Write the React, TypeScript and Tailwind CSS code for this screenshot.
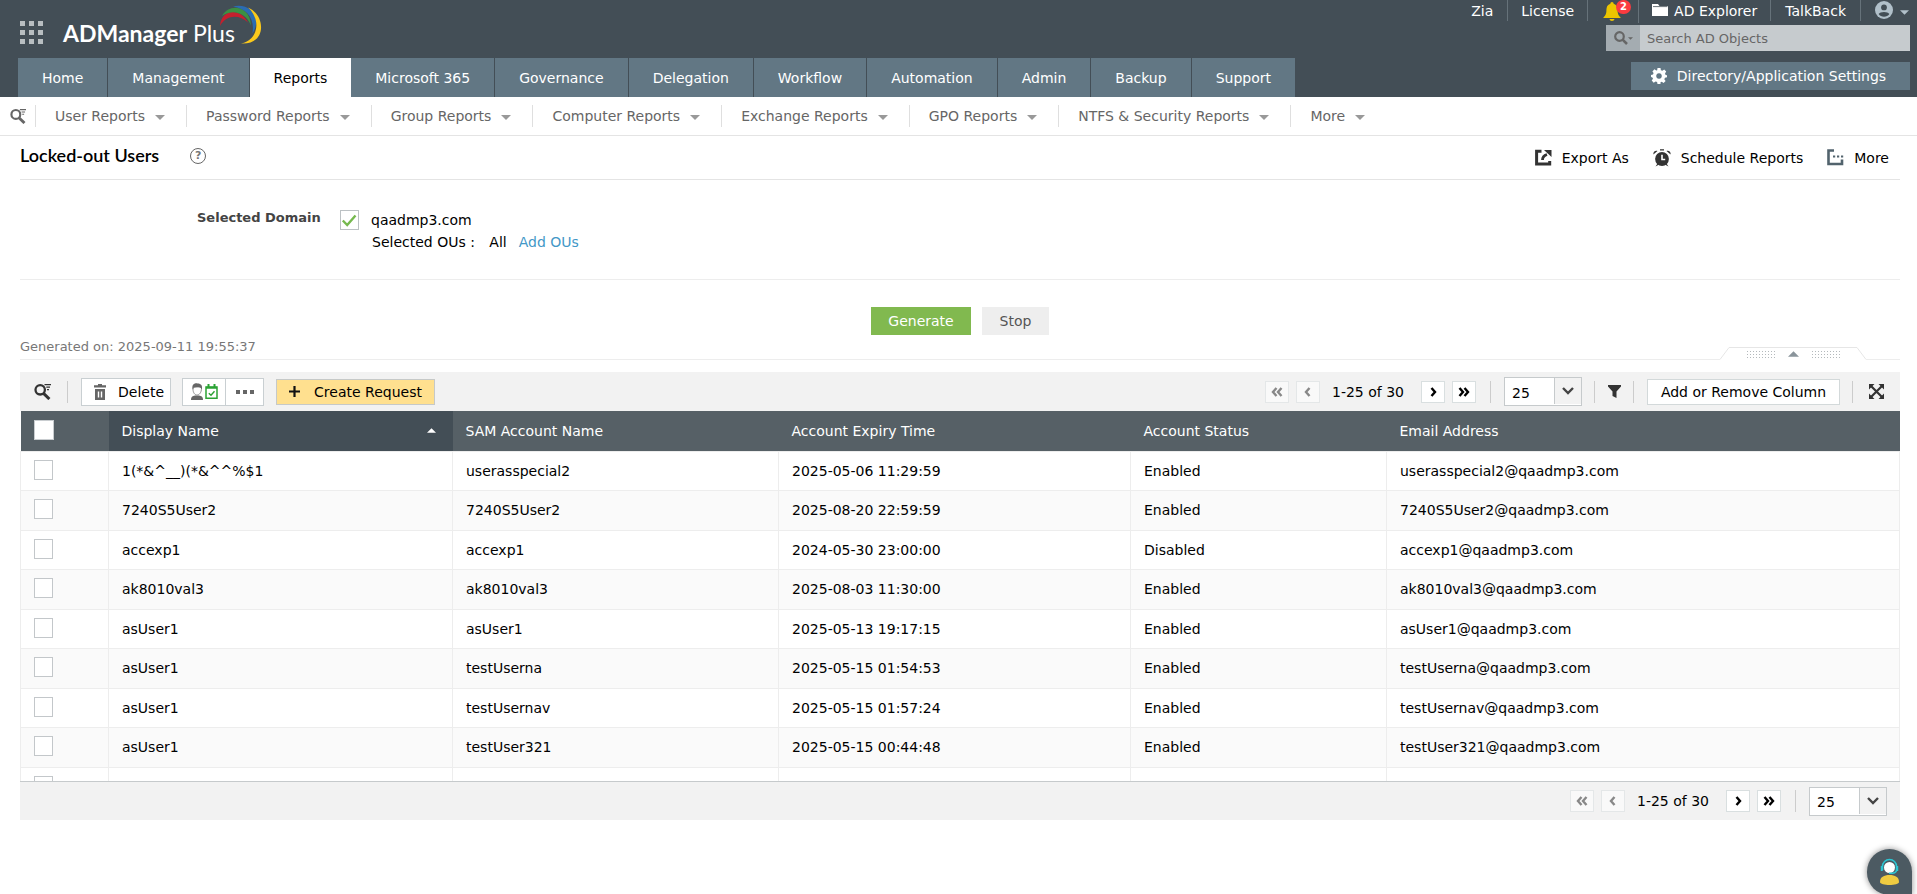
import React from "react";

const tabs = ["Home", "Management", "Reports", "Microsoft 365", "Governance", "Delegation", "Workflow", "Automation", "Admin", "Backup", "Support"];

const reportMenus = ["User Reports", "Password Reports", "Group Reports", "Computer Reports", "Exchange Reports", "GPO Reports", "NTFS & Security Reports", "More"];

const columns = ["SAM Account Name", "Account Expiry Time", "Account Status", "Email Address"];

const rows: string[][] = [
  ["1(*&^__)(*&^^%$1", "userasspecial2", "2025-05-06 11:29:59", "Enabled", "userasspecial2@qaadmp3.com"],
  ["7240S5User2", "7240S5User2", "2025-08-20 22:59:59", "Enabled", "7240S5User2@qaadmp3.com"],
  ["accexp1", "accexp1", "2024-05-30 23:00:00", "Disabled", "accexp1@qaadmp3.com"],
  ["ak8010val3", "ak8010val3", "2025-08-03 11:30:00", "Enabled", "ak8010val3@qaadmp3.com"],
  ["asUser1", "asUser1", "2025-05-13 19:17:15", "Enabled", "asUser1@qaadmp3.com"],
  ["asUser1", "testUserna", "2025-05-15 01:54:53", "Enabled", "testUserna@qaadmp3.com"],
  ["asUser1", "testUsernav", "2025-05-15 01:57:24", "Enabled", "testUsernav@qaadmp3.com"],
  ["asUser1", "testUser321", "2025-05-15 00:44:48", "Enabled", "testUser321@qaadmp3.com"],
  ["", "", "", "", ""],
];

function Caret({ className, up }: { className: string; up?: boolean }) {
  return (
    <svg viewBox="0 0 10 5" className={className} fill="currentColor" aria-hidden="true">
      <path d={up ? "M0 5h10L5 0z" : "M0 0h10L5 5z"} />
    </svg>
  );
}

function FilterSearchIcon({ className }: { className: string }) {
  return (
    <svg viewBox="0 0 17 17" className={className} fill="none" stroke="currentColor" aria-hidden="true">
      <circle cx="6.200" cy="6.800" r="4.700" strokeWidth="2.300" />
      <path d="M9.500 10.300L15.400 16" strokeWidth="3" />
      <path d="M10.500 1.700H17M12.300 4.200H16M13 6.700H15" strokeWidth="1.200" />
    </svg>
  );
}

function Logo() {
  return (
    <div className="flex items-start">
      <span className="mt-[17px] font-[Lato,sans-serif] text-[23px] leading-8 text-white">
        <b className="font-bold">ADManager</b> Plus
      </span>
      <svg viewBox="0 0 44 42" className="-ml-4 mt-1 h-[42px] w-11" aria-hidden="true">
        <path d="M1 22C2 5 21 3 29 18.500C20 10 7 11 1 22Z" fill="#c4202e" />
        <path d="M3 12C10-1 31 1 32 21.500C27 9 14 4.500 3 12Z" fill="#3c9043" />
        <path d="M14 2.500C30-2 44 13 33.500 29.500C36 14 28 5 14 2.500Z" fill="#2b6cb3" />
        <path d="M29 3.500C47 11 48 41 22 39.500C40 36 42 15 29 3.500Z" fill="#fbc91b" />
      </svg>
    </div>
  );
}

function Divider({ className }: { className: string }) {
  return <span className={`w-px ${className}`} />;
}

function Header() {
  return (
    <header className="flex justify-between bg-[#434e56] text-sm text-white">
      <div className="flex flex-col">
        <div className="flex h-[58px]">
          <button aria-label="Apps" className="ml-5 mr-[19px] mt-[21px] h-6 w-6">
            <svg viewBox="0 0 24 24" className="h-6 w-6" fill="#b8bec1">
              <path d="M0 0h5v5H0zM9 0h5v5H9zM18 0h5v5h-5zM0 9h5v5H0zM9 9h5v5H9zM18 9h5v5h-5zM0 18h5v5H0zM9 18h5v5H9zM18 18h5v5h-5z" />
            </svg>
          </button>
          <Logo />
        </div>
        <nav className="ml-[18px] flex h-[39px]">
          {tabs.map((tab) => (
            <a
              key={tab}
              href="#"
              className={
                tab === "Reports"
                  ? "flex items-center bg-white px-6 text-black"
                  : "flex items-center border-r border-[#434e56] bg-[#627784] px-6"
              }
            >
              {tab}
            </a>
          ))}
        </nav>
      </div>

      <div className="flex flex-col items-end pr-[7px]">
        <div className="flex h-[25px] items-start leading-[22px]">
          <a href="#" className="px-[14px]">Zia</a>
          <Divider className="h-[21px] bg-[#66727a]" />
          <a href="#" className="px-[13px]">License</a>
          <Divider className="h-[21px] bg-[#66727a]" />
          <button aria-label="Notifications" className="relative h-[21px] w-[50px]">
            <svg viewBox="0 0 18 19" className="ml-[15px] mt-px h-[19px] w-[18px]" fill="#ecc500">
              <path d="M9 0C10 0 10.600.8 10.600 1.700C13.600 2.500 14.600 5 14.600 8C14.600 12 15.500 13.400 17.600 15.400V16H.4V15.400C2.500 13.400 3.400 12 3.400 8C3.400 5 4.400 2.500 7.400 1.700C7.400.8 8 0 9 0ZM6.500 17H11.500C11.300 18.300 10.300 19 9 19S6.700 18.300 6.500 17Z" />
            </svg>
            <span className="absolute left-7 top-0 h-[14px] w-[15px] rounded-full bg-[#fb3b40] text-center text-[10px] font-bold leading-[14px]">2</span>
          </button>
          <Divider className="h-[23px] bg-[#66727a]" />
          <a href="#" className="flex px-[13px]">
            <svg viewBox="0 0 16 12" className="mr-[6px] mt-1 h-3 w-4" fill="#fff">
              <path d="M0 0h6l1.500 2H16v10H0z" />
              <path d="M1 2.600H15.500" stroke="#434e56" strokeWidth=".8" />
            </svg>
            AD Explorer
          </a>
          <Divider className="h-[21px] bg-[#66727a]" />
          <a href="#" className="px-[14px]">TalkBack</a>
          <Divider className="h-[21px] bg-[#66727a]" />
          <button aria-label="Account" className="ml-[14px] flex">
            <svg viewBox="0 0 18 18" className="mt-px h-[18px] w-[18px]">
              <circle cx="9" cy="9" r="9" fill="#b1c0ca" />
              <circle cx="9" cy="6.400" r="2.900" fill="#434e56" />
              <path d="M3.600 13C5 10.300 13 10.300 14.400 13C12 16.600 6 16.600 3.600 13Z" fill="#434e56" />
            </svg>
            <Caret className="ml-[7px] mr-px mt-[10px] h-[5px] w-[9px] text-[#b1c0ca]" />
          </button>
        </div>
        <form className="flex h-[26px] w-[304px]">
          <button type="button" aria-label="Search type" className="flex w-[34px] items-center justify-center bg-[#a4acb1] text-[#666]">
            <svg viewBox="0 0 14 14" className="h-[14px] w-[14px]" fill="none" stroke="currentColor">
              <circle cx="5.500" cy="5.500" r="4.300" strokeWidth="2.200" />
              <path d="M8.600 8.600L13 13" strokeWidth="2.600" />
            </svg>
            <Caret className="h-[3px] w-[5px]" />
          </button>
          <input aria-label="Search AD Objects" placeholder="Search AD Objects" className="min-w-0 flex-1 bg-[#c6cbce] px-[7px] pt-[2px] text-[13px] text-[#444] placeholder:text-[#666]" />
        </form>
        <button className="mt-[11px] flex h-7 w-[279px] items-center justify-center bg-[#627784] pr-1">
          <svg viewBox="0 0 16 16" className="mr-[10px] h-4 w-4" fill="#fff" fillRule="evenodd">
            <path d="M6.500 0h3l.4 2.200 1.500.6 1.800-1.300 2 2.100-1.200 1.800.6 1.500L16 7.200v2l-2 .5-.7 1.500 1.300 1.800-2 1.900-1.900-1.200-1.200.5L9.500 16h-3l-.4-2-1.500-.6-1.900 1.300-2-2.100 1.300-1.800-.6-1.400L0 9V7l2-.4.6-1.500L1.400 3.400l2-2.100 1.900 1.300.9-.4zM8 5.200a2.800 2.800 0 1 0 .01 0z" />
          </svg>
          Directory/Application Settings
        </button>
      </div>
    </header>
  );
}

function ReportsNav() {
  return (
    <nav className="flex h-[39px] items-center border-b border-[#e4e4e4] text-sm text-[#666]">
      <button aria-label="Search reports" className="ml-[10px] mr-[9px]">
        <FilterSearchIcon className="h-4 w-4" />
      </button>
      {reportMenus.map((item) => (
        <button key={item} className="flex h-[22px] items-center border-l border-[#dfdfdf] pl-[19px] pr-[21px]">
          {item}
          <Caret className="ml-[10px] mt-[3px] h-[5px] w-[10px] text-[#999]" />
        </button>
      ))}
    </nav>
  );
}

function TitleBar() {
  return (
    <div className="mx-5 mr-[17px] flex h-11 items-center justify-between border-b border-[#e4e4e4] text-sm">
      <div className="flex items-center pb-1">
        <h1 className="pb-px font-[Lato,sans-serif] text-lg font-semibold">Locked-out Users</h1>
        <button aria-label="Help" className="ml-[31px] h-4 w-4 rounded-full border border-[#666] text-[11px] font-bold leading-[14px] text-[#777]">?</button>
      </div>
      <div className="flex items-center pr-[11px]">
        <button className="flex items-center">
          <svg viewBox="0 0 17 17" className="mr-[10px] h-[17px] w-[17px]" fill="none" stroke="#333">
            <path d="M6.500 2.300H1.600V15H14.700V12" strokeWidth="3" />
            <path d="M7.500 11C7.500 8 9 6.500 12 5.500" strokeWidth="2.800" />
            <path d="M9 1h7.500v7z" fill="#333" stroke="none" />
          </svg>
          Export As
        </button>
        <button className="ml-6 flex items-center">
          <svg viewBox="0 0 18 18" className="mr-[10px] h-[18px] w-[18px]" fill="#333">
            <circle cx="9" cy="10" r="6.900" />
            <path d="M.4 5.400C0 3 2 1.200 4.500 1.900zM17.600 5.400C18 3 16 1.200 13.500 1.900zM7 .2h4v1.400H7zM2.500 17.500l2-3 1.700 1zM15.500 17.500l-2-3-1.700 1z" />
            <path d="M9 5.800V10.500H12.200" fill="none" stroke="#fff" strokeWidth="1.600" />
          </svg>
          Schedule Reports
        </button>
        <button className="ml-6 flex items-center">
          <svg viewBox="0 0 17 17" className="mr-[10px] h-[17px] w-[17px]" fill="none" stroke="#52636d">
            <path d="M7 1.500H1.500V15H15V10.500" strokeWidth="2.600" />
            <path d="M6 7.500h2.200M10 7.500h2.200M14 7.500h2.200" strokeWidth="2" />
          </svg>
          More
        </button>
      </div>
    </div>
  );
}

function Criteria() {
  return (
    <section className="mx-5 mr-[17px] flex h-[100px] items-start border-b border-[#ededed] text-sm">
      <span className="ml-[177px] mt-7 w-[143px] text-[13px] font-bold leading-5 text-[#444]">Selected Domain</span>
      <div className="mt-[30px]">
        <label className="flex items-center gap-3 leading-5">
          <span className="grid">
            <input type="checkbox" defaultChecked className="h-5 w-[19px] appearance-none border border-[#bcc1c4] bg-white [grid-area:1/1]" />
            <svg viewBox="0 0 19 20" className="pointer-events-none h-5 w-[19px] [grid-area:1/1]" fill="none" stroke="#76b94f" strokeWidth="2.400">
              <path d="M2.800 10.500L7.200 15L15.500 5.500" />
            </svg>
          </span>
          qaadmp3.com
        </label>
        <p className="ml-8 mt-[2px] leading-5">
          Selected OUs : <span className="ml-[10px]">All</span>
          <a href="#" className="ml-3 text-[#4398c7]">Add OUs</a>
        </p>
      </div>
    </section>
  );
}

function DotGrip() {
  return (
    <svg viewBox="0 0 30 8" className="h-2 w-[30px]" stroke="#b4b9bc" strokeWidth="1" strokeDasharray="1 2">
      <path d="M1 1.500H30M1 4.500H30M1 7.500H30" />
    </svg>
  );
}

function GenerateBar() {
  return (
    <section className="text-sm">
      <div className="flex justify-center gap-[11px] pl-[3px] pt-[27px]">
        <button className="h-7 w-[100px] bg-[#81b94f] text-white">Generate</button>
        <button className="h-7 w-[67px] bg-[#eee] text-[#555]">Stop</button>
      </div>
      <div className="ml-5 mr-[17px] flex h-[25px] items-end">
        <p className="flex-1 self-stretch border-b border-[#ededed] text-[13px] leading-6 text-[#777]">Generated on: 2025-09-11 19:55:37</p>
        <button aria-label="Collapse" className="grid h-[13px] w-[146px]">
          <svg viewBox="0 0 146 13" className="h-[13px] w-[146px] [grid-area:1/1]" fill="none" stroke="#e6e6e6">
            <path d="M0 12.500L9 .5H137L146 12.500" />
          </svg>
          <span className="flex items-center justify-center gap-3 pt-px [grid-area:1/1]">
            <DotGrip />
            <Caret up className="h-[6px] w-[11px] text-[#8a949b]" />
            <DotGrip />
          </span>
        </button>
        <span className="w-[34px] self-stretch border-b border-[#ededed]" />
      </div>
    </section>
  );
}

function PageButton({ label, path, muted }: { label: string; path: string; muted?: boolean }) {
  return (
    <button
      aria-label={label}
      className={
        muted
          ? "flex h-[22px] w-6 items-center justify-center border border-[#e4e7e8] bg-[#f9f9f9] text-[#888]"
          : "flex h-[22px] w-6 items-center justify-center border border-[#d9dfe0] bg-white text-black"
      }
    >
      <svg viewBox="0 0 12 10" className="h-[10px] w-3" fill="none" stroke="currentColor" strokeWidth="2.400">
        <path d={path} />
      </svg>
    </button>
  );
}

function Pager() {
  return (
    <div className="flex items-center">
      <div className="flex gap-[7px]">
        <PageButton muted label="First page" path="M5.500 1L2 5L5.500 9M10.500 1L7 5L10.500 9" />
        <PageButton muted label="Previous page" path="M7.500 1L4 5L7.500 9" />
      </div>
      <span className="w-[101px] pl-3">1-25 of 30</span>
      <div className="flex gap-[7px]">
        <PageButton label="Next page" path="M4.500 1L8 5L4.500 9" />
        <PageButton label="Last page" path="M1.500 1L5 5L1.500 9M6.500 1L10 5L6.500 9" />
      </div>
      <Divider className="mx-[14px] mr-[13px] h-[22px] bg-[#ccc]" />
      <div className="grid h-[29px] w-[78px] border border-[#c6cacc] bg-white">
        <select aria-label="Rows per page" className="w-full appearance-none bg-transparent pl-[7px] pt-[2px] [grid-area:1/1]">
          <option>25</option>
        </select>
        <span className="pointer-events-none mb-px flex w-[27px] items-center justify-center justify-self-end border-l border-[#c6cacc] bg-[#f2f2f2] [grid-area:1/1]">
          <svg viewBox="0 0 12 8" className="h-2 w-3" fill="none" stroke="#444" strokeWidth="2.400">
            <path d="M1 1L6 6L11 1" />
          </svg>
        </span>
      </div>
    </div>
  );
}

function Toolbar() {
  return (
    <div className="flex h-[39px] items-center justify-between bg-[#f2f2f2] pl-[14px] pr-4">
      <div className="flex items-center">
        <button aria-label="Search rows" className="text-[#333]">
          <FilterSearchIcon className="h-[17px] w-[17px]" />
        </button>
        <Divider className="mx-4 mr-[13px] h-[22px] bg-[#ccc]" />
        <button className="flex h-7 w-[90px] items-center justify-end gap-3 border border-[#c9cfd2] bg-white pr-[6px]">
          <svg viewBox="0 0 12 16" className="h-4 w-3" fill="#666" fillRule="evenodd">
            <path d="M4 0h4v1.200h4V3.500H0V1.200h4zM1 5h10v11H1zM3.800 7.500v6h1.400v-6zM6.800 7.500v6h1.400v-6z" />
          </svg>
          Delete
        </button>
        <button aria-label="Manage user" className="ml-[11px] flex h-7 w-11 items-center justify-center gap-[2px] border border-[#c9cfd2] bg-white">
          <svg viewBox="0 0 12 17" className="h-[17px] w-3">
            <path d="M0 17C0 13.500 1.500 12.800 4 12.400H8C10.500 12.800 12 13.500 12 17Z" fill="#666" />
            <path d="M2 6C2 10 4 12 6 12S10.500 10 10.500 5L8 3.500L3 4Z" fill="#fff" stroke="#888" strokeWidth=".9" />
            <path d="M1.500 6.500C.5 1 4 0 6.500.4C10 .3 11.800 2.500 10.800 6.500L9.500 4.500L6 4.300L2.800 4.500Z" fill="#666" />
          </svg>
          <svg viewBox="0 0 13 15" className="h-[15px] w-[13px]" fill="none" stroke="#2ba334">
            <path d="M1 3H12V14.200H1z" strokeWidth="1.500" />
            <path d="M1 3.800H12M3.500 0V4M9.500 0V4" strokeWidth="2" />
            <path d="M3.800 9.300L6 11.300L9.500 7.300" strokeWidth="1.400" />
          </svg>
        </button>
        <button aria-label="More actions" className="-ml-px flex h-7 w-[39px] items-center justify-center border border-[#c9cfd2] bg-white">
          <svg viewBox="0 0 18 4" className="h-1 w-[18px]" fill="#666">
            <path d="M0 0h4v4H0zM7 0h4v4H7zM14 0h4v4h-4z" />
          </svg>
        </button>
        <button className="ml-3 flex h-[26px] w-[159px] items-center justify-center gap-[14px] border border-[#c6c9c8] bg-[#ffe08f]">
          <svg viewBox="0 0 11 11" className="h-[11px] w-[11px]" stroke="#111" strokeWidth="2.200">
            <path d="M5.500 0V11M0 5.500H11" />
          </svg>
          Create Request
        </button>
      </div>
      <div className="flex items-center">
        <Pager />
        <Divider className="mx-3 mr-[13px] h-[22px] bg-[#ccc]" />
        <button aria-label="Filter">
          <svg viewBox="0 0 13 13" className="h-[13px] w-[13px]" fill="#333">
            <path d="M0 0H13V1.500L8.500 6.500V13L4.500 11V6.500L0 1.500Z" />
          </svg>
        </button>
        <Divider className="mx-3 mr-[13px] h-[22px] bg-[#ccc]" />
        <button className="h-[26px] w-[193px] border border-[#d3d9da] bg-white">Add or Remove Column</button>
        <Divider className="mx-3 mr-4 h-[22px] bg-[#ccc]" />
        <button aria-label="Full screen">
          <svg viewBox="0 0 15 15" className="h-[15px] w-[15px]" fill="#333">
            <path d="M2 2L13 13M13 2L2 13" stroke="#333" strokeWidth="2.200" />
            <path d="M0 0h5.500L0 5.500zM15 0v5.500L9.500 0zM0 15V9.500L5.500 15zM15 15H9.500L15 9.500z" />
          </svg>
        </button>
      </div>
    </div>
  );
}

function UserTable() {
  return (
    <div className="h-[370px] overflow-hidden">
      <table className="w-full table-fixed border-collapse text-left">
        <colgroup>
          <col className="w-[88px]" />
          <col className="w-[344px]" />
          <col className="w-[326px]" />
          <col className="w-[352px]" />
          <col className="w-[256px]" />
          <col />
        </colgroup>
        <thead>
          <tr className="h-10 bg-[#566066] text-white">
            <th className="pl-[13px] align-top">
              <input type="checkbox" aria-label="Select all users" className="mt-[9px] block h-5 w-5 appearance-none border border-[#c9cdd0] bg-white" />
            </th>
            <th className="bg-[#434e56] px-[13px] font-normal">
              <button className="flex w-full items-center justify-between">
                Display Name
                <Caret up className="mr-1 h-[5px] w-[9px]" />
              </button>
            </th>
            {columns.map((name) => (
              <th key={name} className="px-[13px] font-normal">{name}</th>
            ))}
          </tr>
        </thead>
        <tbody>
          {rows.map((row, index) => (
            <tr key={index} className="odd:h-[39px] even:h-10 even:bg-[#fafafa]">
              <td className="border border-[#ededed] pl-[13px] align-top">
                <input type="checkbox" aria-label={`Select row ${index + 1}`} className="mt-2 block h-5 w-[19px] appearance-none border border-[#c3c7ca] bg-white" />
              </td>
              {row.map((value, cell) => (
                <td key={cell} className="border border-[#ededed] px-[13px]">{value}</td>
              ))}
            </tr>
          ))}
        </tbody>
      </table>
    </div>
  );
}

function ChatButton() {
  return (
    <button aria-label="Chat support" className="fixed -bottom-px right-[5px] flex h-[46px] w-[45px] justify-center rounded-full rounded-br-lg bg-[#4c5a62] shadow-[0_0_6px_rgba(0,0,0,0.45)]">
      <svg viewBox="0 0 20 28" className="mt-[9px] h-7 w-5">
        <circle cx="9.500" cy="9.500" r="5.500" fill="#fff" />
        <path d="M2.500 12V8.500A7 7 0 0 1 16.500 8.500V12M16.500 12C16.500 14.500 14 15.500 9 15.300" fill="none" stroke="#2cc5d2" strokeWidth="1.600" />
        <path d="M1.800 8v5M17.200 8v5" stroke="#2cc5d2" strokeWidth="2" />
        <path d="M0 24C0 19 4 17 9.500 17S19 19 19 24C19 28 0 28 0 24Z" fill="#efcb41" />
      </svg>
    </button>
  );
}

export default function App() {
  return (
    <div className="min-h-screen bg-white font-['DejaVu_Sans',Verdana,sans-serif] text-sm text-black">
      <Header />
      <ReportsNav />
      <TitleBar />
      <Criteria />
      <GenerateBar />
      <main className="ml-5 mr-[17px] mt-3">
        <Toolbar />
        <UserTable />
        <div className="flex h-[39px] items-center justify-end border-t border-[#c6cacc] bg-[#f2f2f2] pr-[13px]">
          <Pager />
        </div>
      </main>
      <ChatButton />
    </div>
  );
}
